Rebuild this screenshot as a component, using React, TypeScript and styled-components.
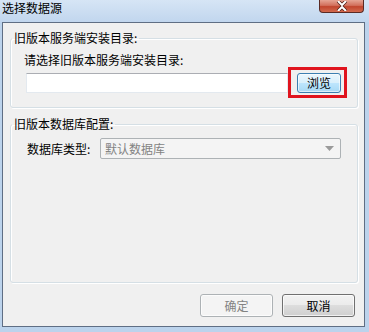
import styled, { createGlobalStyle } from 'styled-components';

const GlobalStyle = createGlobalStyle`
  html, body {
    margin: 0;
    padding: 0;
  }
  body {
    font-family: "Noto Sans CJK SC", "Liberation Sans", sans-serif;
    font-size: 12px;
  }
`;

export default function App() {
  return (
    <>
      <GlobalStyle />
      <Window>
        <TitleBar>
          <Title>选择数据源</Title>
          <CloseButton>
            <svg width="14" height="10" viewBox="0 0 14 10">
              <path d="M3 0 L7 4 L11 0 M3 10 L7 6 L11 10" stroke="#4a1a12" strokeWidth="3.4" fill="none" />
              <path d="M3 0 L7 4 L11 0 M3 10 L7 6 L11 10" stroke="#fff" strokeWidth="2" fill="none" />
            </svg>
          </CloseButton>
        </TitleBar>
        <Client>
          <GroupBox $height={77}>
            <Legend>旧版本服务端安装目录:</Legend>
            <FieldLabel $indent={13}>请选择旧版本服务端安装目录:</FieldLabel>
            <PathRow>
              <PathInput />
              <Highlight>
                <BrowseButton>浏览</BrowseButton>
              </Highlight>
            </PathRow>
          </GroupBox>
          <GroupBox $height={166}>
            <Legend>旧版本数据库配置:</Legend>
            <ComboRow>
              <RowLabel>数据库类型:</RowLabel>
              <Combo>
                <span>默认数据库</span>
                <svg width="9" height="5" viewBox="0 0 9 5">
                  <path d="M0 0 H9 L4.5 5 Z" fill="#9a9a9a" />
                </svg>
              </Combo>
            </ComboRow>
          </GroupBox>
          <Footer>
            <DialogButton disabled>确定</DialogButton>
            <DialogButton>取消</DialogButton>
          </Footer>
        </Client>
      </Window>
    </>
  );
}

const Window = styled.div`
  width: 369px;
  height: 332px;
  display: flex;
  flex-direction: column;
  background: #bcd3ec;
  overflow: hidden;
`;

const TitleBar = styled.div`
  height: 22px;
  flex: none;
  display: flex;
  justify-content: space-between;
  align-items: flex-start;
  background: linear-gradient(#d6e5f5, #c1d6ee);
`;

const Title = styled.div`
  padding: 1px 0 0 2px;
  line-height: 14px;
  font-size: 12px;
  color: #000;
`;

const CloseButton = styled.div`
  width: 45px;
  height: 13px;
  margin-right: 5px;
  box-sizing: border-box;
  display: flex;
  align-items: center;
  justify-content: center;
  border: 1px solid #5a2a24;
  border-top: none;
  border-radius: 0 0 4px 4px;
  background: linear-gradient(#e6a494, #d2705c 45%, #c1452e 55%, #d26a4e);
`;

const Client = styled.div`
  flex: 1;
  margin: 0 4px 5px 2px;
  border: 1px solid #5f6e84;
  background: #f0f0f0;
  display: flex;
  flex-direction: column;
  padding: 8px 6px 0 7px;
  gap: 9px;
`;

const GroupBox = styled.fieldset<{ $height: number }>`
  margin: 0;
  padding: 0 0 0 0;
  min-width: 0;
  height: ${(p) => p.$height}px;
  box-sizing: border-box;
  border: 1px solid #d5dfe5;
  border-radius: 3px;
  box-shadow: inset 1px 1px 0 #fff, 1px 1px 0 #fff;
`;

const Legend = styled.legend`
  margin-left: 1px;
  padding: 0 2px;
  line-height: 14px;
  color: #000;
`;

const FieldLabel = styled.div<{ $indent: number }>`
  margin: 8px 0 0 ${(p) => p.$indent}px;
  line-height: 14px;
  color: #000;
`;

const PathRow = styled.div`
  display: flex;
  align-items: center;
  margin-left: 15px;
`;

const PathInput = styled.div`
  width: 262px;
  height: 20px;
  box-sizing: border-box;
  background: #fff;
  border: 1px solid #e3e9ef;
  border-top-color: #abadb3;
`;

const Highlight = styled.div`
  width: 59px;
  height: 31px;
  box-sizing: border-box;
  border: 3px solid #e0141e;
  display: flex;
  align-items: center;
  padding: 1px 0 0 6px;
`;

const BrowseButton = styled.div`
  width: 44px;
  height: 20px;
  box-sizing: border-box;
  border: 1px solid #3c7fb1;
  border-radius: 3px;
  background: linear-gradient(#eaf6fd, #d9f0fc 50%, #bee6fd 50%, #a7d9f5);
  box-shadow: inset 0 0 0 1px rgba(255, 255, 255, 0.6);
  display: flex;
  align-items: center;
  justify-content: center;
  line-height: 14px;
  color: #000;
`;

const ComboRow = styled.div`
  display: flex;
  align-items: center;
  margin: 7px 0 0 16px;
`;

const RowLabel = styled.div`
  width: 73px;
  line-height: 14px;
  color: #000;
`;

const Combo = styled.div`
  width: 241px;
  height: 21px;
  box-sizing: border-box;
  border: 1px solid #adb2b5;
  border-radius: 2px;
  background: #f4f4f4;
  display: flex;
  align-items: center;
  justify-content: space-between;
  padding: 0 6px 0 4px;
  color: #838383;
  line-height: 14px;
`;

const Footer = styled.div`
  display: flex;
  justify-content: flex-end;
  gap: 9px;
  margin-top: 2px;
  padding-right: 3px;
`;

const DialogButton = styled.button`
  width: 73px;
  height: 23px;
  box-sizing: border-box;
  padding: 0;
  font: inherit;
  line-height: 14px;
  border-radius: 3px;
  border: 1px solid ${(p) => (p.disabled ? '#adb2b5' : '#707070')};
  color: ${(p) => (p.disabled ? '#838383' : '#000')};
  background: ${(p) =>
    p.disabled
      ? '#f4f4f4'
      : 'linear-gradient(#f2f2f2, #ebebeb 50%, #dddddd 50%, #cfcfcf)'};
  box-shadow: inset 0 0 0 1px rgba(255, 255, 255, 0.7);
`;
